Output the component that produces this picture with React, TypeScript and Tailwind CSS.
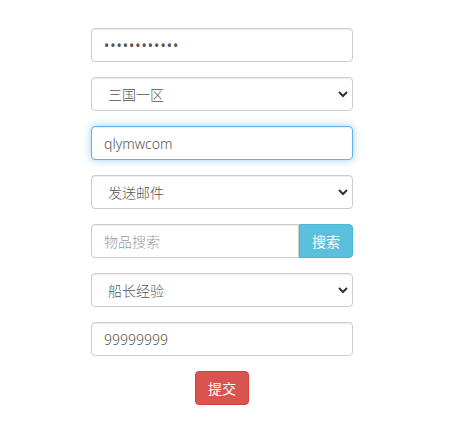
import React from "react";

const font = { fontFamily: '"Noto Sans", "Noto Sans CJK SC", sans-serif' };

const base =
  "block w-full h-[34px] px-3 text-[14px] text-[#555] bg-white border rounded-[4px] outline-none placeholder:text-[#999]";
const field = `${base} font-light border-[#ccc] shadow-[inset_0_1px_1px_rgba(0,0,0,0.075)]`;
const focused = `${base} font-light border-[#66afe9] shadow-[inset_0_1px_1px_rgba(0,0,0,0.075),0_0_8px_rgba(102,175,233,0.6)]`;

function Select({ value, options }: { value: string; options: string[] }) {
  return (
    <div className="relative">
      <select defaultValue={value} className={`${field} appearance-none pl-4`}>
        {options.map((o) => (
          <option key={o}>{o}</option>
        ))}
      </select>
      <svg
        className="absolute right-[4px] top-[13px] pointer-events-none"
        width="12"
        height="8"
        viewBox="0 0 12 8"
      >
        <path d="M2 2 L6 6 L10 2" fill="none" stroke="#333" strokeWidth="2" />
      </svg>
    </div>
  );
}

export default function App() {
  return (
    <div className="min-h-[433px] bg-white pt-[28px]" style={font}>
      <form className="ml-[91px] w-[262px] flex flex-col gap-[15px]">
        <input
          type="password"
          defaultValue="qlymwcom1234"
          className={`${base} font-normal tracking-[1px] border-[#ccc] shadow-[inset_0_1px_1px_rgba(0,0,0,0.075)]`}
        />
        <Select value="三国一区" options={["三国一区", "三国二区"]} />
        <input type="text" defaultValue="qlymwcom" className={focused} />
        <Select value="发送邮件" options={["发送邮件", "直接发送"]} />
        <div className="flex">
          <input
            type="text"
            placeholder="物品搜索"
            className={`${field} rounded-r-none`}
          />
          <button
            type="button"
            className="shrink-0 w-[54px] h-[34px] bg-[#5bc0de] border border-[#46b8da] text-white text-[14px] rounded-r-[4px]"
          >
            搜索
          </button>
        </div>
        <Select value="船长经验" options={["船长经验", "船员经验"]} />
        <input type="text" defaultValue="99999999" className={field} />
        <div className="flex justify-center">
          <button
            type="button"
            className="w-[54px] h-[34px] bg-[#d9534f] border border-[#d43f3a] text-white text-[14px] rounded-[4px]"
          >
            提交
          </button>
        </div>
      </form>
    </div>
  );
}
